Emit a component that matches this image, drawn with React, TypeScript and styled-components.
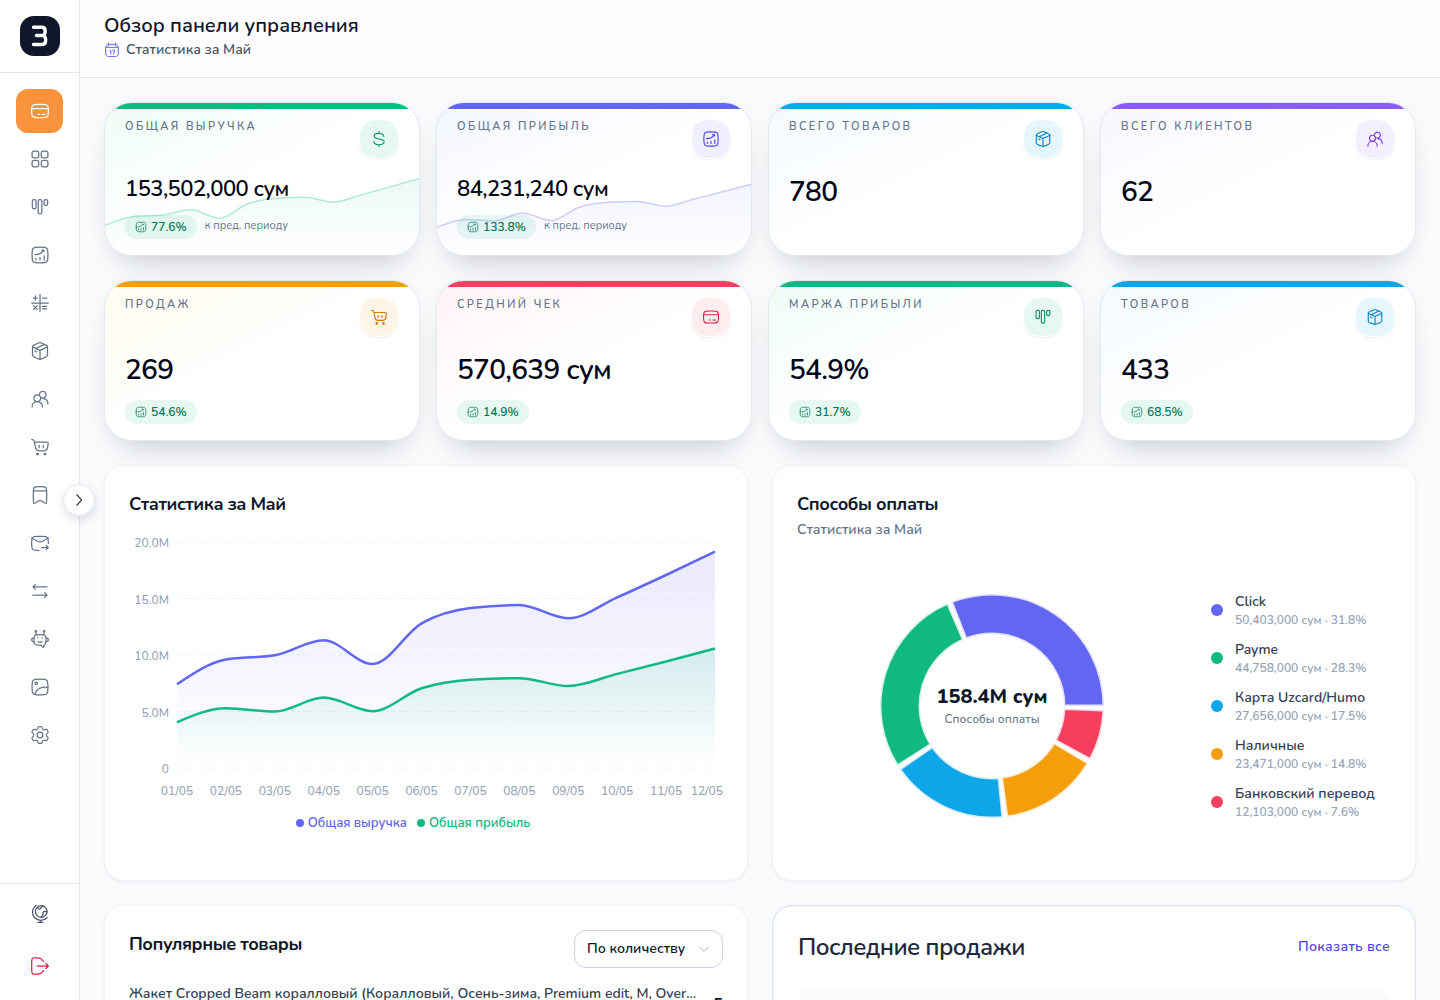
import React, { useId } from 'react';
import styled, { createGlobalStyle } from 'styled-components';

const GlobalStyle = createGlobalStyle`
  *, *::before, *::after { box-sizing: border-box; }
  body {
    margin: 0;
    background: #f8fafc;
    color: #0f172a;
    font-family: Nunito, "Noto Sans", "Open Sans", sans-serif;
    font-size: 14px;
    font-weight: 500;
    line-height: 20px;
    -webkit-font-smoothing: antialiased;
  }
  h1, h2, p, ul, dl, dd { margin: 0; padding: 0; }
  ul { list-style: none; }
  button, select { font-family: inherit; }
`;

/* ---------- icons ---------- */

const iconShapes = {
  card: (
    <>
      <path d="M2 12c0-3.54 0-5.3 1.05-6.44.17-.18.36-.35.56-.5C4.9 4 6.9 4 10.84 4h2.32c3.94 0 5.93 0 7.23 1.06.2.15.39.32.56.5C22 6.7 22 8.46 22 12s0 5.3-1.05 6.44a4.6 4.6 0 0 1-.56.5C19.1 20 17.1 20 13.16 20h-2.32c-3.94 0-5.93 0-7.23-1.06a4.6 4.6 0 0 1-.56-.5C2 17.3 2 15.54 2 12Z" />
      <path d="M2 9h20M10 16h1.5M14.5 16H18" />
    </>
  ),
  grid: (
    <>
      <rect x="2.5" y="2.5" width="8" height="8" rx="2.5" />
      <rect x="13.5" y="2.5" width="8" height="8" rx="2.5" />
      <rect x="2.5" y="13.5" width="8" height="8" rx="2.5" />
      <rect x="13.5" y="13.5" width="8" height="8" rx="2.5" />
    </>
  ),
  kanban: (
    <>
      <rect x="2.8" y="3.2" width="4.4" height="11" rx="1.8" />
      <rect x="9.8" y="3.2" width="4.4" height="17" rx="1.8" />
      <rect x="16.8" y="3.2" width="4.4" height="7" rx="2" />
    </>
  ),
  chart: (
    <>
      <path d="M2.5 12c0-4.48 0-6.72 1.39-8.11C5.28 2.5 7.52 2.5 12 2.5s6.72 0 8.11 1.39C21.5 5.28 21.5 7.52 21.5 12s0 6.72-1.39 8.11C18.72 21.5 16.48 21.5 12 21.5s-6.72 0-8.11-1.39C2.5 18.72 2.5 16.48 2.5 12Z" />
      <path d="M7 18v-2M12 18v-3M17 18v-5M6 11.5c2.15.1 7.06-.26 9.82-4.66M14 6.3l1.87-.31c.23-.03.57.15.65.37L17 8" />
    </>
  ),
  calc: (
    <path d="M12 2v20M2 12h20M4 6h5M6.5 3.5v5M15 6h5M4.5 15.5l4 4M8.5 15.5l-4 4M15 16h5M15 19h5" />
  ),
  box: (
    <>
      <path d="M12 22c-.82 0-1.6-.33-3.17-.99C4.94 19.37 3 18.55 3 17.17V7M12 22c.82 0 1.6-.33 3.17-.99C19.06 19.37 21 18.55 21 17.17V7M12 22V11.35" />
      <path d="M8.33 9.69 5.41 8.28C3.8 7.5 3 7.11 3 6.5s.8-1 2.41-1.78l2.92-1.41C10.13 2.44 11.03 2 12 2s1.87.44 3.67 1.31l2.92 1.41C20.2 5.5 21 5.89 21 6.5s-.8 1-2.41 1.78l-2.92 1.41C13.87 10.56 12.97 11 12 11s-1.87-.44-3.67-1.31ZM6 12l2 1M17 4 7 9" />
    </>
  ),
  users: (
    <>
      <circle cx="8.7" cy="11" r="4" />
      <path d="M2.5 21.5c0-3.7 2.7-6.5 6.2-6.5s6.3 2.8 6.3 6.5" />
      <path d="M11.2 6.5a4 4 0 1 1 1.8 3.7M16 11.5c3.3.3 5.5 3 5.5 6.5" />
    </>
  ),
  cart: (
    <>
      <path d="M2 3h.7c1.3 0 2 .7 2.3 1.9L5.3 6H20c1.3 0 2 .8 1.8 2l-.7 4.5c-.4 2.7-1.8 4-4.5 4H11c-2.7 0-3.9-1.2-4.3-3.6L5.3 6M11 10v2.5M16 10v2.5" />
      <circle cx="9" cy="20.5" r="1" fill="currentColor" />
      <circle cx="18" cy="20.5" r="1" fill="currentColor" />
    </>
  ),
  bookmark: (
    <path d="M4 18V9c0-3.3 0-5 1-6s2.7-1 6-1h2c3.3 0 5 0 6 1s1 2.7 1 6v9c0 2.5 0 3.7-.8 4-1.6.6-4.7-3.5-7.2-3.5S6.4 22.6 4.8 22c-.8-.3-.8-1.5-.8-4ZM4 7h16" />
  ),
  mail: (
    <>
      <path d="M22 12.5V11c-.06-3.06-.1-4.6-1.23-5.73C19.64 4.13 18.07 4.1 14.92 4.02a115 115 0 0 0-5.84 0C5.93 4.1 4.36 4.13 3.23 5.27 2.1 6.4 2.07 7.94 2 11c-.02.98-.02 1.96 0 2.95.07 3.06.1 4.6 1.23 5.73C4.36 20.82 5.93 20.86 9.08 20.94L11 21" />
      <path d="m2 6 6.9 3.9c2.55 1.45 3.65 1.45 6.2 0L22 6M14 17.5h8M19.5 15l2.5 2.5-2.5 2.5" />
    </>
  ),
  swap: <path d="M20.5 7h-17M6.5 4l-3 3 3 3M3.5 17h17M17.5 14l3 3-3 3" />,
  robot: (
    <>
      <path d="M16.3 22.2c-1.6-.4-2.6-1.3-2.9-2.8H11c-2.6 0-4 0-5-1s-1.3-2.4-1.3-5.400.2-4.400 1.300-5.400 2.400-1 5-1h2c2.600 0 4 0 5 1s1.300 2.400 1.300 5.400-.2 4.300-1.200 5.300c-.8.800-1.500 1.100-1.600 1.900-.1.700 0 1.300-.2 2Z" />
      <path d="M7.500 6.500 7 3.500M16.500 6.500l.5-3M4.500 10.800c-1.600 0-2.500.7-2.500 2.200s.9 2.200 2.500 2.200M19.500 10.800c1.600 0 2.500.7 2.500 2.200s-.9 2.200-2.500 2.200M9.500 15c1.400 1.300 3.600 1.300 5 0M9 10.600v.3M15 10.600v.3" />
      <circle cx="7" cy="2.6" r=".8" />
      <circle cx="17" cy="2.6" r=".8" />
    </>
  ),
  image: (
    <>
      <path d="M2.5 12c0-4.48 0-6.72 1.39-8.11C5.28 2.5 7.52 2.5 12 2.5s6.72 0 8.11 1.39C21.5 5.28 21.5 7.52 21.5 12s0 6.72-1.39 8.11C18.72 21.5 16.48 21.5 12 21.5s-6.72 0-8.11-1.39C2.5 18.72 2.5 16.48 2.5 12Z" />
      <circle cx="7.5" cy="7.5" r="1.5" />
      <path d="M21.5 12.7C15 11 8.5 13.5 5.5 21" />
    </>
  ),
  gear: (
    <>
      <path d="m21.320 7.140-.5-.86c-.37-.64-.55-.97-.87-1.100-.32-.12-.68-.02-1.400.18l-1.220.35c-.46.1-.94.04-1.360-.17l-.34-.2a2 2 0 0 1-.78-.97l-.34-1c-.22-.66-.33-.99-.59-1.180-.26-.19-.6-.19-1.300-.19h-1.120c-.7 0-1.040 0-1.300.19-.26.19-.37.52-.59 1.180l-.34 1a2 2 0 0 1-.79.970l-.33.200c-.42.210-.9.270-1.360.170l-1.220-.350c-.72-.200-1.080-.300-1.400-.180-.31.130-.5.460-.87 1.100l-.5.860c-.35.610-.52.910-.49 1.240.4.320.27.580.74 1.100l1.030 1.150c.25.320.43.880.43 1.380s-.18 1.050-.43 1.370l-1.030 1.160c-.47.520-.7.780-.74 1.100-.3.320.14.630.49 1.230l.5.860c.37.650.56.970.87 1.100.32.130.68.030 1.400-.18l1.220-.34c.46-.1.940-.05 1.360.17l.34.190c.36.230.63.570.78.970l.34 1c.22.660.33.990.59 1.180.26.190.6.190 1.300.190h1.120c.7 0 1.040 0 1.300-.190.26-.19.37-.52.59-1.180l.34-1c.15-.4.42-.74.78-.97l.34-.190c.42-.22.9-.27 1.360-.17l1.220.34c.72.210 1.080.310 1.400.180.310-.13.5-.45.870-1.100l.5-.86c.35-.6.520-.910.490-1.230-.04-.32-.27-.58-.74-1.100l-1.030-1.160a2.600 2.600 0 0 1-.43-1.370c0-.5.180-1.060.430-1.380l1.030-1.150c.47-.52.7-.78.740-1.100.03-.33-.14-.63-.490-1.240Z" />
      <circle cx="12" cy="12" r="3.5" />
    </>
  ),
  globe: (
    <>
      <circle cx="13.5" cy="9" r="7" />
      <path d="M7.5 1.8A10 10 0 0 0 3 10c0 5.6 4.5 9.5 10 9.5 3.2 0 5.8-1.2 7.5-3M12.5 19.5V22M9.5 22h6M9 4c.8 1.5 1.7 2.5 3 2 1.2-.4.8-1.8 2-2.2.9-.3 1.5-.7 1.5-1.5M20.3 9.5c-2-.8-4.3-.5-4.8.7-.4 1 .5 1.6 0 2.8-.4.9-1.5 1.2-1.8 3" />
    </>
  ),
  logout: (
    <path d="M14 4.5c-.1-1.4-1-1.7-3-1.9l-4-.4c-2.6-.3-3.4-.2-4.1.7C2 3.9 2 5.3 2 9v6c0 3.7 0 5.1.9 6.1.7.9 1.5 1 4.1.7l4-.4c2-.2 2.9-.5 3-1.9M14 4.5c1.3.1 1.9.6 2 2M14 19.5c1.3-.1 1.9-.6 2-2M8.5 12H22M19 9l3 3-3 3" />
  ),
  calendar: (
    <>
      <path d="M2.5 13.5c0-4.7 0-7 1.4-8.5S7.5 3.5 12 3.5s6.700 0 8.100 1.500 1.400 3.800 1.400 8.500 0 6-1.400 7.300c-1.400 1.200-3.600 1.200-8.100 1.200s-6.700 0-8.100-1.200c-1.400-1.300-1.400-2.600-1.400-7.300ZM6.500 1.500v4M17.500 1.500v4M3 8h18" />
      <path d="m9 13 1.2-.8V18M13 12.2h3L14.2 18" />
    </>
  ),
  dollar: (
    <path d="M18.5 8.5c0-2.6-2.6-4-6.5-4s-6.500 1.400-6.500 3.900c0 5.200 13.300 2 13.300 7.300 0 2.500-2.900 3.900-6.800 3.900s-6.800-1.400-6.800-4.100M12 2v2.500M12 19.600V22" />
  ),
  right: <path d="m9 5 6.5 7L9 19" />,
  down: <path d="m5 9 7 7 7-7" />,
};

type IconName = keyof typeof iconShapes;

const IconSvg = styled.svg`
  display: block;
  flex: none;
  fill: none;
  stroke: currentColor;
  stroke-width: 1.5;
  stroke-linecap: round;
  stroke-linejoin: round;
`;

function Icon({ name, size = 20 }: { name: IconName; size?: number }) {
  return (
    <IconSvg width={size} height={size} viewBox="0 0 24 24" aria-hidden="true">
      {iconShapes[name]}
    </IconSvg>
  );
}

/* ---------- shell ---------- */

const Shell = styled.div`
  display: flex;
  height: 100vh;
  overflow: hidden;
`;

const Sidebar = styled.aside`
  position: relative;
  z-index: 2;
  display: flex;
  flex: none;
  flex-direction: column;
  width: 80px;
  background: #fff;
  border-right: 1px solid #e2e8f0;
`;

const Brand = styled.a`
  display: flex;
  justify-content: center;
  padding: 16px 0;
  border-bottom: 1px solid #e2e8f0;
`;

const SideNav = styled.nav`
  display: flex;
  flex: 1;
  flex-direction: column;
  gap: 4px;
  min-height: 0;
  padding: 16px;
`;

const SideItem = styled.button<{ $active?: boolean; $color?: string }>`
  display: flex;
  flex: none;
  align-items: center;
  justify-content: center;
  height: 44px;
  padding: 0;
  border: 0;
  border-radius: 12px;
  background: ${(p) => (p.$active ? '#fb923c' : 'transparent')};
  color: ${(p) => (p.$active ? '#fff' : p.$color ?? '#64748b')};
  cursor: pointer;
`;

const SideFooter = styled.div`
  display: flex;
  flex-direction: column;
  gap: 8px;
  padding: 8px 16px 12px;
  border-top: 1px solid #e2e8f0;
`;

const ExpandButton = styled.button`
  position: absolute;
  top: 50%;
  right: 0;
  display: flex;
  align-items: center;
  justify-content: center;
  width: 32px;
  height: 32px;
  padding: 0;
  border: 1px solid #e2e8f0;
  border-radius: 50%;
  background: #fff;
  color: #334155;
  box-shadow: 0 4px 10px rgba(15, 23, 42, 0.12);
  transform: translate(50%, -50%);
  cursor: pointer;
`;

const Page = styled.div`
  display: flex;
  flex: 1;
  flex-direction: column;
  min-width: 0;
`;

const PageHeader = styled.header`
  flex: none;
  padding: 12px 24px 17px;
  background: #fdfdfe;
  border-bottom: 1px solid #e2e8f0;
`;

const PageTitle = styled.h1`
  font-size: 20px;
  font-weight: 600;
  line-height: 28px;
`;

const Period = styled.p`
  display: flex;
  align-items: center;
  gap: 6px;
  color: #475569;
  font-weight: 600;
  line-height: 20px;

  svg { color: #6366f1; }
`;

const Content = styled.main`
  display: flex;
  flex: 1;
  flex-direction: column;
  gap: 24px;
  min-height: 0;
  padding: 24px;
  overflow-y: auto;
  scrollbar-width: none;

  > * { flex: none; }
`;

/* ---------- statistics ---------- */

const StatGrid = styled.section`
  display: grid;
  grid-template-columns: repeat(4, minmax(0, 1fr));
  gap: 16px;
`;

const StatCard = styled.article<{ $accent: string; $tint: string }>`
  position: relative;
  padding: 16px 20px;
  overflow: hidden;
  border: 1px solid #e2e8f0;
  border-radius: 28px;
  background: linear-gradient(to bottom right, ${(p) => p.$tint}, #fff 50%);
  box-shadow: 0 20px 32px -18px rgba(15, 23, 42, 0.22), 0 2px 20px rgba(15, 23, 42, 0.03);

  &::before {
    content: '';
    position: absolute;
    inset: 0 0 auto;
    height: 6px;
    background: ${(p) => p.$accent};
  }
`;

const StatHead = styled.div`
  display: flex;
  align-items: flex-start;
  justify-content: space-between;
  margin-bottom: 16px;
`;

const StatLabel = styled.h2`
  color: #64748b;
  font-size: 11px;
  font-weight: 600;
  line-height: 16px;
  letter-spacing: 0.22em;
  text-transform: uppercase;
`;

const StatIcon = styled.span<{ $color: string; $bg: string }>`
  display: flex;
  align-items: center;
  justify-content: center;
  width: 40px;
  height: 40px;
  border: 1px solid #fff;
  border-radius: 16px;
  background: ${(p) => p.$bg};
  background-clip: padding-box;
  color: ${(p) => p.$color};
  box-shadow: 0 1px 2px rgba(15, 23, 42, 0.06);
`;

const StatValue = styled.p<{ $compact?: boolean }>`
  position: relative;
  color: #020617;
  font-size: ${(p) => (p.$compact ? 22 : 28)}px;
  font-weight: 600;
  line-height: ${(p) => (p.$compact ? 28 : 35)}px;
  letter-spacing: -0.025em;
  white-space: nowrap;
`;

const StatTrend = styled.div`
  position: relative;
  display: flex;
  gap: 8px;
  margin-top: 12px;
  color: #64748b;
  font-size: 11px;
  font-weight: 400;
  line-height: 21px;
`;

const TrendPill = styled.span`
  display: flex;
  align-items: center;
  gap: 4px;
  height: 24px;
  padding: 0 10px;
  border-radius: 12px;
  background: rgba(16, 185, 129, 0.1);
  color: #047857;
  font-size: 12px;
  font-weight: 600;
`;

const Sparkline = styled.svg`
  position: absolute;
  left: 0;
  bottom: 0;
  width: 100%;
  height: 80px;
`;

/* ---------- panels ---------- */

const PanelGrid = styled.section`
  display: grid;
  grid-template-columns: repeat(2, minmax(0, 1fr));
  gap: 24px;
`;

const Panel = styled.article`
  padding: 24px;
  border: 1px solid #f1f5f9;
  border-radius: 20px;
  background: #fff;
  box-shadow: 0 1px 3px rgba(15, 23, 42, 0.06);
`;

const OutlinedPanel = styled(Panel)`
  padding: 25px;
  border-color: #dbe3ee;
  box-shadow: inset 0 0 0 1px #f1f5f9;
`;

const PanelTitle = styled.h2`
  font-size: 18px;
  font-weight: 700;
  line-height: 28px;
  letter-spacing: -0.025em;
`;

const PanelNote = styled.p`
  margin-top: 2px;
  color: #64748b;
  font-weight: 600;
`;

const AreaSvg = styled.svg`
  display: block;
  width: 100%;
  margin-top: 16px;
  font-size: 12px;
`;

const ChartLegend = styled.ul`
  display: flex;
  justify-content: center;
  gap: 10px;
  margin-top: 7px;
  padding-right: 26px;
  font-size: 13px;
  font-weight: 600;
`;

const ChartLegendItem = styled.li<{ $color: string }>`
  display: flex;
  align-items: center;
  gap: 4px;
  color: ${(p) => p.$color};

  &::before {
    content: '';
    width: 8px;
    height: 8px;
    border-radius: 50%;
    background: currentColor;
  }
`;

const PaymentBody = styled.div`
  display: grid;
  grid-template-columns: minmax(0, 1fr) 180px;
  gap: 24px;
  align-items: center;
  min-height: 300px;
  margin-top: 16px;
`;

const DonutBox = styled.div`
  display: grid;
  place-items: center;

  > * { grid-area: 1 / 1; }
`;

const DonutCenter = styled.div`
  display: flex;
  flex-direction: column;
  align-items: center;
  padding-bottom: 2px;
`;

const DonutTotal = styled.strong`
  font-size: 20px;
  font-weight: 800;
  line-height: 28px;
`;

const DonutCaption = styled.span`
  color: #64748b;
  font-size: 12px;
  line-height: 16px;
`;

const MethodList = styled.ul`
  display: flex;
  flex-direction: column;
  gap: 12px;
`;

const MethodItem = styled.li<{ $color: string }>`
  display: flex;
  align-items: center;
  gap: 12px;

  &::before {
    content: '';
    flex: none;
    width: 12px;
    height: 12px;
    border-radius: 50%;
    background: ${(p) => p.$color};
  }
`;

const MethodName = styled.p`
  color: #334155;
  font-weight: 600;
  white-space: nowrap;
`;

const MethodShare = styled.p`
  color: #94a3b8;
  font-size: 12px;
  font-weight: 600;
  line-height: 16px;
  white-space: nowrap;
`;

const PanelHead = styled.div`
  display: flex;
  align-items: flex-start;
  justify-content: space-between;
`;

const SelectBox = styled.label`
  position: relative;
  display: block;
  width: 149px;
  color: #94a3b8;

  svg {
    position: absolute;
    top: 12px;
    right: 12px;
    pointer-events: none;
  }
`;

const SortSelect = styled.select`
  width: 100%;
  height: 38px;
  padding: 0 32px 2px 12px;
  appearance: none;
  border: 1px solid #cbd5e1;
  border-radius: 12px;
  background: #fff;
  color: #0f172a;
  font-size: 14px;
  font-weight: 600;
`;

const ProductRow = styled.li`
  display: flex;
  align-items: center;
  gap: 16px;
  height: 40px;
  margin-top: 16px;
`;

const ProductInfo = styled.div`
  flex: 1;
  min-width: 0;
`;

const ProductName = styled.p`
  overflow: hidden;
  color: #334155;
  font-weight: 600;
  text-overflow: ellipsis;
  white-space: nowrap;
`;

const ProductBar = styled.div`
  height: 8px;
  margin-top: 12px;
  border-radius: 4px;
  background: #f1f5f9;
`;

const ProductCount = styled.strong`
  font-size: 16px;
  font-weight: 700;
`;

const SalesTitle = styled.h2`
  color: #1e293b;
  font-size: 24px;
  font-weight: 600;
  line-height: 32px;
  letter-spacing: -0.025em;
`;

const ShowAll = styled.a`
  color: #4f46e5;
  font-weight: 600;
  line-height: 32px;
  letter-spacing: 0.02em;
  text-decoration: none;
`;

const SaleRow = styled.div`
  height: 72px;
  margin-top: 24px;
  border-radius: 16px;
  background: #f8fafc;
`;

/* ---------- charts ---------- */

type Point = [number, number];

/* Monotone cubic interpolation over evenly spaced points. */
function monotonePath(points: Point[]) {
  const n = points.length;
  const step = points[1][0] - points[0][0];
  const slope = (i: number) => (points[i + 1][1] - points[i][1]) / step;
  const tangents = points.map((_, i) => {
    if (i === 0 || i === n - 1) return 0;
    const a = slope(i - 1);
    const b = slope(i);
    return (Math.sign(a) + Math.sign(b)) * Math.min(Math.abs(a), Math.abs(b), Math.abs(a + b) / 4);
  });
  tangents[0] = (3 * slope(0) - tangents[1]) / 2;
  tangents[n - 1] = (3 * slope(n - 2) - tangents[n - 2]) / 2;
  let d = `M${points[0][0]},${points[0][1]}`;
  for (let i = 1; i < n; i++) {
    const [x0, y0] = points[i - 1];
    const [x1, y1] = points[i];
    const third = step / 3;
    d += `C${x0 + third},${y0 + third * tangents[i - 1]} ${x1 - third},${y1 - third * tangents[i]} ${x1},${y1}`;
  }
  return d;
}

const revenue = [7.41, 9.6, 9.98, 11.3, 9.2, 12.8, 14.16, 14.42, 13.25, 15.1, 17.08, 19.14];
const profit = [4.05, 5.28, 5, 6.23, 5.03, 7.06, 7.82, 7.95, 7.25, 8.33, 9.43, 10.57];
const days = revenue.map((_, i) => `${String(i + 1).padStart(2, '0')}/05`);

function Spark({ data, color }: { data: number[]; color: string }) {
  const id = useId();
  const line = monotonePath(data.map((v, i): Point => [(i * 314) / 11, 80 - v * 4]));
  return (
    <Sparkline viewBox="0 0 314 80" preserveAspectRatio="none" aria-hidden="true">
      <defs>
        <linearGradient id={id} x1="0" y1="0" x2="0" y2="1">
          <stop offset="0" stopColor={color} stopOpacity="0.08" />
          <stop offset="1" stopColor={color} stopOpacity="0" />
        </linearGradient>
      </defs>
      <path d={`${line}V80H0Z`} fill={`url(#${id})`} />
      <path d={line} fill="none" stroke={color} strokeOpacity="0.3" strokeWidth="1.5" />
    </Sparkline>
  );
}

const PLOT = { left: 48, right: 586, top: 8, bottom: 234 };

function Series({ data, color, opacity }: { data: number[]; color: string; opacity: number }) {
  const id = useId();
  const step = (PLOT.right - PLOT.left) / (data.length - 1);
  const line = monotonePath(
    data.map((v, i): Point => [PLOT.left + i * step, PLOT.bottom - (v / 20) * (PLOT.bottom - PLOT.top)]),
  );
  return (
    <>
      <defs>
        <linearGradient id={id} x1="0" y1="0" x2="0" y2="1">
          <stop offset="0.05" stopColor={color} stopOpacity={opacity} />
          <stop offset="0.98" stopColor={color} stopOpacity="0" />
        </linearGradient>
      </defs>
      <path d={`${line}V${PLOT.bottom}H${PLOT.left}Z`} fill={`url(#${id})`} />
      <path d={line} fill="none" stroke={color} strokeWidth="2.5" />
    </>
  );
}

function AreaChart() {
  const step = (PLOT.right - PLOT.left) / (days.length - 1);
  const ticks = ['20.0M', '15.0M', '10.0M', '5.0M', '0'];
  return (
    <AreaSvg viewBox="0 0 594 272" role="img" aria-label="Статистика за Май">
      {ticks.map((label, i) => {
        const y = PLOT.top + (i * (PLOT.bottom - PLOT.top)) / 4;
        return (
          <g key={label}>
            <line x1={PLOT.left} x2={PLOT.right} y1={y} y2={y} stroke="#eef2f6" strokeDasharray="3 3" />
            <text x={PLOT.left - 8} y={y + 5} textAnchor="end" fill="#94a3b8">{label}</text>
          </g>
        );
      })}
      <Series data={revenue} color="#6366f1" opacity={0.13} />
      <Series data={profit} color="#10b981" opacity={0.13} />
      {days.map((label, i) => (
        <text
          key={label}
          x={i === days.length - 1 ? 594 : PLOT.left + i * step}
          y={261}
          textAnchor={i === days.length - 1 ? 'end' : 'middle'}
          fill="#94a3b8"
        >
          {label}
        </text>
      ))}
    </AreaSvg>
  );
}

const methods = [
  { name: 'Click', sum: '50,403,000', share: 31.8, color: '#6366f1' },
  { name: 'Payme', sum: '44,758,000', share: 28.3, color: '#10b981' },
  { name: 'Карта Uzcard/Humo', sum: '27,656,000', share: 17.5, color: '#0ea5e9' },
  { name: 'Наличные', sum: '23,471,000', share: 14.8, color: '#f59e0b' },
  { name: 'Банковский перевод', sum: '12,103,000', share: 7.6, color: '#f43f5e' },
];

function sectorPath(from: number, to: number, inner: number, outer: number) {
  const at = (deg: number, r: number) => {
    const a = (deg * Math.PI) / 180;
    return `${120 + r * Math.cos(a)},${120 - r * Math.sin(a)}`;
  };
  return `M${at(from, outer)}A${outer},${outer} 0 0 0 ${at(to, outer)}L${at(to, inner)}A${inner},${inner} 0 0 1 ${at(from, inner)}Z`;
}

function Donut() {
  const gap = 2;
  let angle = 0;
  return (
    <svg width="240" height="240" viewBox="0 0 240 240" aria-hidden="true">
      {methods.map((m) => {
        const from = angle;
        const to = from + (m.share / 100) * (360 - gap * methods.length);
        angle = to + gap;
        return (
          <path
            key={m.name}
            d={sectorPath(from, to, 72, 112)}
            fill={m.color}
            stroke="#fff"
            strokeOpacity="0.8"
            strokeWidth="3"
          />
        );
      })}
    </svg>
  );
}

/* ---------- data ---------- */

const palette = {
  emerald: { accent: '#10b981', tint: '#f0fdf6', bg: '#e7f8f2', color: '#059669' },
  indigo: { accent: '#6366f1', tint: '#f3f6ff', bg: '#efeffe', color: '#4f46e5' },
  sky: { accent: '#0ea5e9', tint: '#f3faff', bg: '#e6f6fd', color: '#0284c7' },
  violet: { accent: '#8b5cf6', tint: '#f8f6ff', bg: '#f3effe', color: '#7c3aed' },
  amber: { accent: '#f59e0b', tint: '#fffcef', bg: '#fef5e7', color: '#d97706' },
  rose: { accent: '#f43f5e', tint: '#fff4f5', bg: '#feecef', color: '#e11d48' },
};

type Stat = {
  label: string;
  value: string;
  icon: IconName;
  tone: keyof typeof palette;
  trend?: string;
  spark?: number[];
};

const mainStats: Stat[] = [
  {
    label: 'Общая выручка', value: '153,502,000 сум', icon: 'dollar', tone: 'emerald', trend: '77.6%',
    spark: revenue,
  },
  {
    label: 'Общая прибыль', value: '84,231,240 сум', icon: 'chart', tone: 'indigo', trend: '133.8%',
    spark: [6.9, 8.9, 8.5, 10.5, 8.6, 12, 13.2, 13.4, 12.2, 14, 15.8, 17.7],
  },
  { label: 'Всего товаров', value: '780', icon: 'box', tone: 'sky' },
  { label: 'Всего клиентов', value: '62', icon: 'users', tone: 'violet' },
];

const extraStats: Stat[] = [
  { label: 'Продаж', value: '269', icon: 'cart', tone: 'amber', trend: '54.6%' },
  { label: 'Средний чек', value: '570,639 сум', icon: 'card', tone: 'rose', trend: '14.9%' },
  { label: 'Маржа прибыли', value: '54.9%', icon: 'kanban', tone: 'emerald', trend: '31.7%' },
  { label: 'Товаров', value: '433', icon: 'box', tone: 'sky', trend: '68.5%' },
];

function Stats({ items }: { items: Stat[] }) {
  return (
    <StatGrid>
      {items.map((s) => {
        const tone = palette[s.tone];
        return (
          <StatCard key={s.label} $accent={tone.accent} $tint={tone.tint}>
            {s.spark && <Spark data={s.spark} color={tone.accent} />}
            <StatHead>
              <StatLabel>{s.label}</StatLabel>
              <StatIcon $color={tone.color} $bg={tone.bg}>
                <Icon name={s.icon} size={18} />
              </StatIcon>
            </StatHead>
            <StatValue $compact={Boolean(s.spark)}>{s.value}</StatValue>
            {s.trend && (
              <StatTrend>
                <TrendPill>
                  <Icon name="chart" size={12} />
                  {s.trend}
                </TrendPill>
                {s.spark && 'к пред. периоду'}
              </StatTrend>
            )}
          </StatCard>
        );
      })}
    </StatGrid>
  );
}

const navItems: [IconName, string][] = [
  ['card', 'Обзор'],
  ['grid', 'Разделы'],
  ['kanban', 'Доска'],
  ['chart', 'Аналитика'],
  ['calc', 'Калькулятор'],
  ['box', 'Товары'],
  ['users', 'Клиенты'],
  ['cart', 'Продажи'],
  ['bookmark', 'Закладки'],
  ['mail', 'Рассылки'],
  ['swap', 'Переводы'],
  ['robot', 'Бот'],
  ['image', 'Галерея'],
  ['gear', 'Настройки'],
];

export default function App() {
  return (
    <>
      <GlobalStyle />
      <Shell>
        <Sidebar>
          <Brand href="#" aria-label="Главная">
            <svg width="40" height="40" viewBox="0 0 40 40" aria-hidden="true">
              <rect width="40" height="40" rx="14" fill="#0f172a" />
              <path
                d="M13.5 11.3h8.3c2 0 3.3 1.4 3.3 3.2v1.7c0 2-1.5 3.3-3.5 3.3h-5.1h5.5c2.1 0 3.6 1.5 3.6 3.5v2c0 2.1-1.5 3.5-3.6 3.5h-8.5"
                fill="none"
                stroke="#fff"
                strokeWidth="3.4"
                strokeLinecap="round"
                strokeLinejoin="round"
              />
            </svg>
          </Brand>
          <SideNav>
            {navItems.map(([icon, label], i) => (
              <SideItem key={icon} type="button" aria-label={label} $active={i === 0}>
                <Icon name={icon} />
              </SideItem>
            ))}
          </SideNav>
          <SideFooter>
            <SideItem type="button" aria-label="Язык" $color="#475569"><Icon name="globe" /></SideItem>
            <SideItem type="button" aria-label="Выйти" $color="#e11d48"><Icon name="logout" /></SideItem>
          </SideFooter>
          <ExpandButton type="button" aria-label="Развернуть меню"><Icon name="right" size={18} /></ExpandButton>
        </Sidebar>

        <Page>
          <PageHeader>
            <PageTitle>Обзор панели управления</PageTitle>
            <Period>
              <Icon name="calendar" size={16} />
              Статистика за Май
            </Period>
          </PageHeader>

          <Content>
            <Stats items={mainStats} />
            <Stats items={extraStats} />

            <PanelGrid>
              <Panel>
                <PanelTitle>Статистика за Май</PanelTitle>
                <AreaChart />
                <ChartLegend>
                  <ChartLegendItem $color="#6366f1">Общая выручка</ChartLegendItem>
                  <ChartLegendItem $color="#10b981">Общая прибыль</ChartLegendItem>
                </ChartLegend>
              </Panel>
              <Panel>
                <PanelTitle>Способы оплаты</PanelTitle>
                <PanelNote>Статистика за Май</PanelNote>
                <PaymentBody>
                  <DonutBox>
                    <Donut />
                    <DonutCenter>
                      <DonutTotal>158.4M сум</DonutTotal>
                      <DonutCaption>Способы оплаты</DonutCaption>
                    </DonutCenter>
                  </DonutBox>
                  <MethodList>
                    {methods.map((m) => (
                      <MethodItem key={m.name} $color={m.color}>
                        <div>
                          <MethodName>{m.name}</MethodName>
                          <MethodShare>{m.sum} сум · {m.share}%</MethodShare>
                        </div>
                      </MethodItem>
                    ))}
                  </MethodList>
                </PaymentBody>
              </Panel>
            </PanelGrid>

            <PanelGrid>
              <Panel>
                <PanelHead>
                  <PanelTitle>Популярные товары</PanelTitle>
                  <SelectBox>
                    <SortSelect aria-label="Сортировка" defaultValue="count">
                      <option value="count">По количеству</option>
                    </SortSelect>
                    <Icon name="down" size={14} />
                  </SelectBox>
                </PanelHead>
                <ul>
                  <ProductRow>
                    <ProductInfo>
                      <ProductName>
                        Жакет Cropped Beam коралловый (Коралловый, Осень-зима, Premium edit, M, Oversize)
                      </ProductName>
                      <ProductBar />
                    </ProductInfo>
                    <ProductCount>5</ProductCount>
                  </ProductRow>
                </ul>
              </Panel>
              <OutlinedPanel>
                <PanelHead>
                  <SalesTitle>Последние продажи</SalesTitle>
                  <ShowAll href="#">Показать все</ShowAll>
                </PanelHead>
                <SaleRow />
              </OutlinedPanel>
            </PanelGrid>
          </Content>
        </Page>
      </Shell>
    </>
  );
}
